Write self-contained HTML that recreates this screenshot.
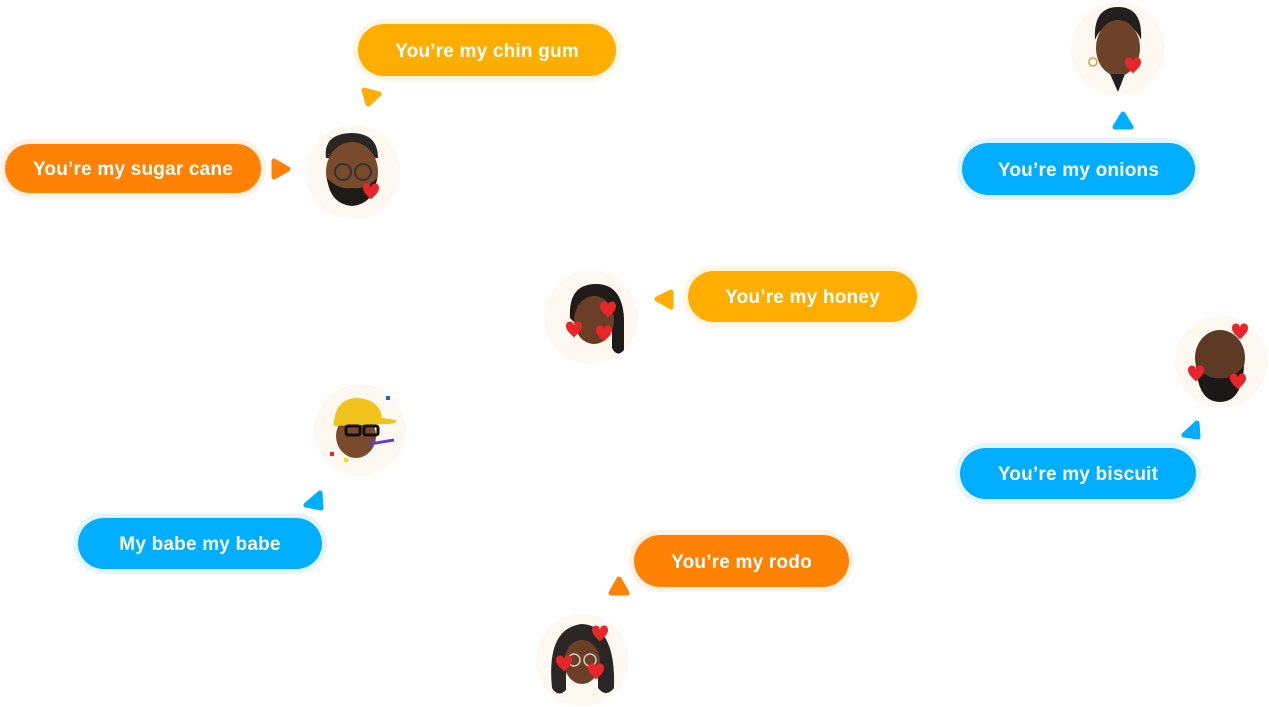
<!DOCTYPE html>
<html><head><meta charset="utf-8"><style>
body{margin:0;width:1269px;height:707px;background:#fff;position:relative;overflow:hidden;font-family:"Liberation Sans",sans-serif}
.b{position:absolute;border-radius:30px;color:#fff;font-weight:bold;font-size:19px;display:flex;align-items:center;justify-content:center;letter-spacing:0.2px;padding-top:3px;box-sizing:border-box}
.o{background:#FF8205;box-shadow:0 0 0 5px #FFF2E4}
.y{background:#FFAE00;box-shadow:0 0 0 5px #FFF6E3}
.bl{background:#00AEFF;box-shadow:0 0 0 5px #E4F5FF}
.av{position:absolute;border-radius:50%;background:#FDF9F1}
svg.t{position:absolute}
svg.t path.r{stroke-linejoin:round;stroke-width:5}
</style></head><body>
<div class="b y" style="left:358px;top:24px;width:258px;height:52px">You’re my chin gum</div>
<div class="b o" style="left:5px;top:144px;width:256px;height:49px">You’re my sugar cane</div>
<div class="b bl" style="left:962px;top:143px;width:233px;height:52px">You’re my onions</div>
<div class="b y" style="left:688px;top:271px;width:229px;height:51px">You’re my honey</div>
<div class="b bl" style="left:960px;top:448px;width:236px;height:51px">You’re my biscuit</div>
<div class="b bl" style="left:78px;top:518px;width:244px;height:51px">My babe my babe</div>
<div class="b o" style="left:634px;top:535px;width:215px;height:52px">You’re my rodo</div>

<svg class="t" style="left:360px;top:86px" width="24" height="22"><path class="r" d="M4 4 L19 8 L8 18 Z" fill="#FFAE00" stroke="#FFAE00"/></svg>
<svg class="t" style="left:270px;top:157px" width="22" height="24"><path class="r" d="M4 4 L18 12 L4 20 Z" fill="#FF8205" stroke="#FF8205"/></svg>
<svg class="t" style="left:1111px;top:109px" width="24" height="22"><path class="r" d="M4 18 L12 5 L20 18 Z" fill="#00AEFF" stroke="#00AEFF"/></svg>
<svg class="t" style="left:653px;top:288px" width="22" height="24"><path class="r" d="M4 11 L18 4 L18 19 Z" fill="#FFAE00" stroke="#FFAE00"/></svg>
<svg class="t" style="left:1180px;top:419px" width="22" height="24"><path class="r" d="M4 16 L17 4 L18 18 Z" fill="#00AEFF" stroke="#00AEFF"/></svg>
<svg class="t" style="left:302px;top:489px" width="24" height="24"><path class="r" d="M4 16 L18 4 L19 19 Z" fill="#00AEFF" stroke="#00AEFF"/></svg>
<svg class="t" style="left:607px;top:574px" width="26" height="24"><path class="r" d="M4 19 L12 5 L20 19 Z" fill="#FF8205" stroke="#FF8205"/></svg>

<!-- avatars -->
<div class="av" style="left:306px;top:125px;width:94px;height:94px"></div>
<svg class="t" style="left:318px;top:128px" width="70" height="82"><path d="M8 30 Q5 6 33 5 Q60 5 60 30 Z" fill="#2a2623"/><ellipse cx="34" cy="44" rx="26" ry="30" fill="#7a4a2c"/><path d="M9 50 Q12 76 34 78 Q56 76 59 50 Q48 62 34 60 Q20 62 9 50Z" fill="#1e1a18"/><circle cx="25" cy="44" r="8" fill="none" stroke="#333" stroke-width="2"/><circle cx="45" cy="44" r="8" fill="none" stroke="#333" stroke-width="2"/><path d="M45 60 c0-6 8-6 8 0 c0-6 8-6 8 0 c0 6-8 10-8 12 c0-2-8-6-8-12z" fill="#e8262a"/></svg>

<div class="av" style="left:1071px;top:2px;width:94px;height:94px"></div>
<svg class="t" style="left:1085px;top:4px" width="66" height="88"><path d="M10 36 Q8 3 33 3 Q58 3 56 36 Q50 20 33 20 Q16 20 10 36Z" fill="#231f1d"/><ellipse cx="33" cy="44" rx="22" ry="28" fill="#6e4228"/><path d="M25 70 L33 88 L40 70Z" fill="#231f1d"/><circle cx="8" cy="58" r="4" fill="none" stroke="#d4a33a" stroke-width="1.5"/><path d="M40 58 c0-6 8-6 8 0 c0-6 8-6 8 0 c0 6-8 10-8 12 c0-2-8-6-8-12z" fill="#e8262a"/></svg>

<div class="av" style="left:544px;top:270px;width:94px;height:94px"></div>
<svg class="t" style="left:562px;top:278px" width="70" height="80"><path d="M8 40 Q6 6 34 6 Q60 6 62 40 L62 72 Q55 80 50 70 L50 40 Q40 22 30 22 Q16 24 14 46Z" fill="#1f1b19"/><ellipse cx="32" cy="42" rx="20" ry="24" fill="#6b3f26"/><path d="M38 28 c0-6 8-6 8 0 c0-6 8-6 8 0 c0 6-8 10-8 12 c0-2-8-6-8-12z" fill="#e8262a"/><path d="M4 48 c0-6 8-6 8 0 c0-6 8-6 8 0 c0 6-8 10-8 12 c0-2-8-6-8-12z" fill="#e8262a"/><path d="M34 52 c0-6 8-6 8 0 c0-6 8-6 8 0 c0 6-8 10-8 12 c0-2-8-6-8-12z" fill="#e8262a"/></svg>

<div class="av" style="left:314px;top:384px;width:92px;height:92px"></div>
<svg class="t" style="left:326px;top:392px" width="78" height="74"><ellipse cx="30" cy="44" rx="20" ry="22" fill="#7a4a2c"/><path d="M8 30 Q10 6 32 6 Q54 8 56 26 L70 28 Q72 32 60 32 L8 34Z" fill="#f1c21b"/><rect x="20" y="34" width="14" height="9" rx="2" fill="none" stroke="#111" stroke-width="3"/><rect x="38" y="34" width="14" height="9" rx="2" fill="none" stroke="#111" stroke-width="3"/><path d="M44 52 L68 48" stroke="#6a3fbf" stroke-width="3"/><rect x="4" y="60" width="4" height="4" fill="#e23"/><rect x="18" y="66" width="4" height="4" fill="#fd0"/><rect x="60" y="4" width="4" height="4" fill="#26c"/></svg>

<div class="av" style="left:1175px;top:316px;width:92px;height:92px"></div>
<svg class="t" style="left:1186px;top:322px" width="70" height="82"><ellipse cx="34" cy="36" rx="25" ry="28" fill="#5e3a25"/><path d="M10 44 Q12 80 34 80 Q56 80 58 44 Q46 58 34 56 Q22 58 10 44Z" fill="#1c1817"/><path d="M46 6 c0-6 8-6 8 0 c0-6 8-6 8 0 c0 6-8 10-8 12 c0-2-8-6-8-12z" fill="#e8262a"/><path d="M2 48 c0-6 8-6 8 0 c0-6 8-6 8 0 c0 6-8 10-8 12 c0-2-8-6-8-12z" fill="#e8262a"/><path d="M44 56 c0-6 8-6 8 0 c0-6 8-6 8 0 c0 6-8 10-8 12 c0-2-8-6-8-12z" fill="#e8262a"/></svg>

<div class="av" style="left:536px;top:614px;width:92px;height:92px"></div>
<svg class="t" style="left:546px;top:618px" width="72" height="82"><path d="M6 70 Q0 10 36 6 Q70 8 68 70 Q60 80 52 70 L52 40 L20 40 L20 72 Q12 80 6 70Z" fill="#2a2624"/><ellipse cx="36" cy="44" rx="18" ry="22" fill="#6b3f26"/><circle cx="28" cy="42" r="6" fill="none" stroke="#ccc" stroke-width="1.5"/><circle cx="44" cy="42" r="6" fill="none" stroke="#ccc" stroke-width="1.5"/><path d="M46 12 c0-6 8-6 8 0 c0-6 8-6 8 0 c0 6-8 10-8 12 c0-2-8-6-8-12z" fill="#e8262a"/><path d="M10 42 c0-6 8-6 8 0 c0-6 8-6 8 0 c0 6-8 10-8 12 c0-2-8-6-8-12z" fill="#e8262a"/><path d="M42 50 c0-6 8-6 8 0 c0-6 8-6 8 0 c0 6-8 10-8 12 c0-2-8-6-8-12z" fill="#e8262a"/></svg>
</body></html>
